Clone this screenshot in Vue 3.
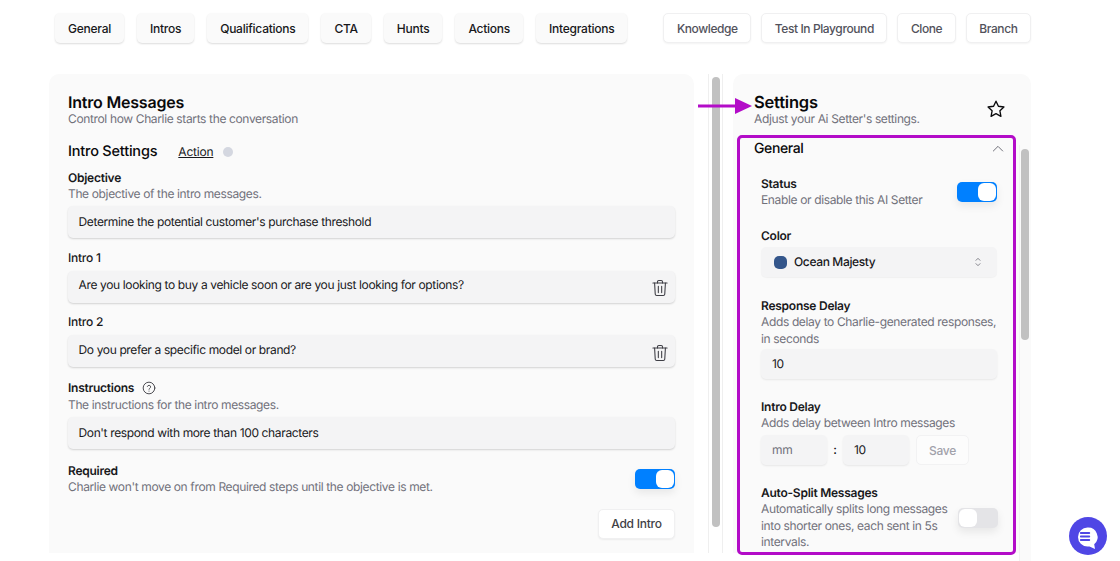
<template>
  <div class="page">
    <div class="toolbar">
      <div class="tabs">
        <button v-for="tab in tabs" :key="tab" class="btn tab">{{ tab }}</button>
      </div>
      <div class="actions">
        <button v-for="action in actions" :key="action" class="btn action">{{ action }}</button>
      </div>
    </div>

    <div class="columns">
      <section class="panel left-panel">
        <h2 class="title">Intro Messages</h2>
        <p class="desc">Control how Charlie starts the conversation</p>

        <div class="settings-head">
          <h3>Intro Settings</h3>
          <a class="action-link">Action</a>
          <span class="dot"></span>
        </div>

        <div class="label first-label">Objective</div>
        <p class="desc">The objective of the intro messages.</p>
        <div class="field wide top-gap">Determine the potential customer's purchase threshold</div>

        <template v-for="intro in intros" :key="intro.label">
          <div class="label intro-label">{{ intro.label }}</div>
          <div class="field wide intro-field">
            <span>{{ intro.text }}</span>
            <svg class="trash" viewBox="0 0 24 24" fill="none" stroke="#3f3f46" stroke-width="1.300" stroke-linecap="round" stroke-linejoin="round">
              <path d="M3.500 6h17" />
              <path d="M9 6V4.500C9 3.700 9.700 3 10.500 3h3c.8 0 1.500.7 1.500 1.500V6" />
              <path d="M5.500 6l.8 13.500c.1 1 .9 1.500 1.700 1.500h8c.8 0 1.600-.5 1.700-1.500L18.500 6" />
              <path d="M10 10v7.500M14 10v7.500" />
            </svg>
          </div>
        </template>

        <div class="label instructions-label">
          Instructions
          <svg class="help" viewBox="0 0 24 24" fill="none" stroke="#3f3f46" stroke-width="1.600" stroke-linecap="round">
            <circle cx="12" cy="12" r="10" />
            <path d="M9.200 9.300a2.900 2.900 0 0 1 5.600.9c0 1.900-2.800 2.300-2.800 4" />
            <path d="M12 17.300v.1" />
          </svg>
        </div>
        <p class="desc instructions-desc">The instructions for the intro messages.</p>
        <div class="field wide top-gap">Don't respond with more than 100 characters</div>

        <div class="switch-row required-row">
          <div>
            <div class="label">Required</div>
            <p class="desc">Charlie won't move on from Required steps until the objective is met.</p>
          </div>
          <span class="toggle on"><i></i></span>
        </div>

        <div class="add-row">
          <button class="btn add">Add Intro</button>
        </div>
      </section>

      <div class="track left-track"><span class="thumb"></span></div>

      <section class="panel right-panel">
        <div class="settings-title">
          <div>
            <h2 class="title">Settings</h2>
            <p class="desc">Adjust your Ai Setter's settings.</p>
          </div>
          <svg class="star" viewBox="0 0 24 24" fill="none" stroke="#09090b" stroke-width="1.600" stroke-linejoin="round">
            <path d="M12 2.600l2.900 6.100 6.600.9-4.800 4.600 1.200 6.600-5.900-3.200-5.900 3.200 1.200-6.600-4.800-4.600 6.600-.9z" />
          </svg>
        </div>

        <div class="scroll-area">
          <div class="general">
            <div class="general-head">
              <span>General</span>
              <svg class="chevron" viewBox="0 0 24 24" fill="none" stroke="#71717a" stroke-width="1.500" stroke-linecap="round" stroke-linejoin="round">
                <path d="M5 15l7-7 7 7" />
              </svg>
            </div>

            <div class="group">
              <div class="switch-row status-row">
                <div>
                  <div class="label">Status</div>
                  <p class="desc">Enable or disable this AI Setter</p>
                </div>
                <span class="toggle on"><i></i></span>
              </div>

              <div class="label color-label">Color</div>
              <div class="field select">
                <span class="swatch"></span>
                <span class="select-text">Ocean Majesty</span>
                <svg class="updown" viewBox="0 0 12 18" fill="none" stroke="#71717a" stroke-width="1.300" stroke-linecap="round" stroke-linejoin="round">
                  <path d="M3 6.500l3-3 3 3M3 11.500l3 3 3-3" />
                </svg>
              </div>

              <div class="label delay-label">Response Delay</div>
              <p class="desc">Adds delay to Charlie-generated responses, in seconds</p>
              <div class="field compact top-gap-small">10</div>

              <div class="label intro-delay-label">Intro Delay</div>
              <p class="desc">Adds delay between Intro messages</p>
              <div class="time-row">
                <div class="field compact time placeholder">mm</div>
                <span class="colon">:</span>
                <div class="field compact time">10</div>
                <button class="btn save">Save</button>
              </div>

              <div class="switch-row split-row">
                <div class="split-text">
                  <div class="label">Auto-Split Messages</div>
                  <p class="desc">Automatically splits long messages into shorter ones, each sent in 5s intervals.</p>
                </div>
                <span class="toggle"><i></i></span>
              </div>
            </div>
          </div>
          <div class="track right-track"><span class="thumb"></span></div>
        </div>

        <!-- annotation drawn over the screenshot -->
        <div class="highlight"></div>
        <svg class="arrow" viewBox="0 0 54 16">
          <path d="M0 6.500h37V0l17 8-17 8V9.500H0z" fill="#b30cc8" />
        </svg>
      </section>
    </div>

    <button class="chat" aria-label="Chat">
      <svg viewBox="0 0 38 38">
        <path d="M18.500 10.500a9.500 9.500 0 0 0 0 19h2l5.500 2.500-.8-4.800a9.500 9.500 0 0 0-6.700-16.700z" fill="#fff" />
        <path d="M11.800 16h8.500M11.800 19.500h8.500M11.800 23h8.500" stroke="#4f46e5" stroke-width="1.800" stroke-linecap="round" />
      </svg>
    </button>
  </div>
</template>

<script setup>
const tabs = ['General', 'Intros', 'Qualifications', 'CTA', 'Hunts', 'Actions', 'Integrations']
const actions = ['Knowledge', 'Test In Playground', 'Clone', 'Branch']

const intros = [
  { label: 'Intro 1', text: 'Are you looking to buy a vehicle soon or are you just looking for options?' },
  { label: 'Intro 2', text: 'Do you prefer a specific model or brand?' }
]
</script>

<style>
html,
body {
  margin: 0;
  background: #fff;
  overflow: hidden;
}
</style>

<style scoped>
.page {
  position: relative;
  width: 1120px;
  height: 561px;
  overflow: hidden;
  font-family: Inter, "Liberation Sans", sans-serif;
  font-size: 12px;
  line-height: 16px;
  letter-spacing: -0.36px;
  text-rendering: geometricPrecision;
  color: #09090b;
  background: #fff;
}

.toolbar {
  display: flex;
  justify-content: space-between;
  width: 976px;
  margin-left: 55px;
  padding-top: 13px;
}

.tabs {
  display: flex;
  gap: 13px;
}

.actions {
  display: flex;
  gap: 10px;
}

.btn {
  height: 30px;
  padding: 0 13px;
  border: 0;
  border-radius: 5px;
  white-space: nowrap;
  font-family: inherit;
  font-size: 12px;
  letter-spacing: -0.25px;
  font-weight: 500;
}

.tab {
  background: #fafafa;
  color: #18181b;
  box-shadow: 0 1px 2px rgba(0, 0, 0, 0.14);
}

.action {
  padding: 0 12.500px;
  background: #fff;
  border: 1px solid #f0f0f1;
  color: #52525b;
  letter-spacing: -0.4px;
  box-shadow: 0 1px 2px rgba(0, 0, 0, 0.05);
}

.columns {
  display: flex;
  height: 479px;
  margin: 31px 0 0 49px;
  width: 982px;
}

.panel {
  background: #fafafa;
  border-radius: 10px 10px 0 0;
}

.left-panel {
  width: 645px;
  padding: 20px 19px 0;
  box-sizing: border-box;
}

.title {
  margin: 0;
  font-size: 16px;
  line-height: 17px;
  font-weight: 600;
  letter-spacing: -0.2px;
}

.desc {
  margin: 0;
  color: #71717a;
  font-size: 12px;
  line-height: 16.400px;
}

.settings-head {
  display: flex;
  align-items: center;
  height: 20px;
  margin-top: 15px;
}

.settings-head h3 {
  margin: 0;
  font-size: 14.500px;
  font-weight: 500;
  letter-spacing: -0.2px;
}

.action-link {
  margin-left: 21px;
  font-size: 12px;
  letter-spacing: -0.2px;
  text-decoration: underline;
  color: #18181b;
}

.dot {
  width: 10px;
  height: 10px;
  margin-left: 10px;
  border-radius: 50%;
  background: #d4d7e0;
}

.label {
  font-size: 12px;
  line-height: 16px;
  font-weight: 600;
  letter-spacing: -0.25px;
  color: #18181b;
}

.first-label {
  margin-top: 8px;
}

.field {
  box-sizing: border-box;
  display: flex;
  align-items: center;
  height: 30px;
  padding: 0 10.500px;
  background: #f4f4f5;
  border-radius: 5px;
  box-shadow: 0 1px 2px rgba(0, 0, 0, 0.16);
  color: #18181b;
}

.wide {
  height: 32px;
}

.top-gap {
  margin-top: 3.200px;
}

.intro-label {
  margin-top: 11.500px;
  font-weight: 500;
}

.intro-field {
  justify-content: space-between;
  margin-top: 5px;
  padding-bottom: 3px;
}

.trash {
  width: 20px;
  height: 20px;
  margin: 6px -5px 0 0;
  flex-shrink: 0;
}

.instructions-label {
  display: flex;
  align-items: center;
  gap: 8px;
  margin-top: 13px;
}

.instructions-desc {
  margin-top: 1px;
}

.help {
  width: 14px;
  height: 14px;
}

.switch-row {
  display: flex;
  justify-content: space-between;
  align-items: center;
}

.required-row {
  margin-top: 14px;
}

.toggle {
  position: relative;
  display: block;
  width: 40px;
  height: 20px;
  flex-shrink: 0;
  border-radius: 5px;
  background: #e4e4e7;
  box-shadow: 0 4px 8px rgba(0, 0, 0, 0.08);
}

.toggle i {
  position: absolute;
  top: 1px;
  left: 1px;
  width: 18px;
  height: 18px;
  border-radius: 6px;
  background: #fff;
}

.toggle.on {
  background: #0080ff;
}

.toggle.on i {
  left: auto;
  right: 1px;
}

.add-row {
  display: flex;
  justify-content: flex-end;
  margin-top: 13.500px;
}

.add {
  width: 77px;
  padding: 0;
  background: #fff;
  color: #3f3f46;
  border: 1px solid #f0f0f1;
  box-shadow: 0 1px 2px rgba(0, 0, 0, 0.06);
}

.track {
  box-sizing: border-box;
  flex-shrink: 0;
  background: #fff;
}

.thumb {
  display: block;
  border-radius: 5px;
  background: #c1c1c1;
}

.left-track {
  width: 15px;
  margin-left: 14px;
  padding: 3px 3px 0;
  border-left: 1px solid #efefef;
  border-right: 1px solid #efefef;
}

.left-track .thumb {
  width: 8px;
  height: 450px;
}

.right-panel {
  position: relative;
  width: 298px;
  margin-left: 10px;
  box-sizing: border-box;
  padding-top: 20px;
}

.settings-title {
  display: flex;
  justify-content: space-between;
  align-items: flex-start;
  height: 61px;
  padding-left: 21px;
}

.right-panel .title {
  font-size: 16.500px;
}

.star {
  width: 20px;
  height: 20px;
  margin: 5px 25px 0 0;
}

.scroll-area {
  display: flex;
}

.general {
  width: 286px;
  padding-left: 21px;
  box-sizing: border-box;
}

.general-head {
  display: flex;
  justify-content: space-between;
  align-items: center;
  width: 251.500px;
  height: 16px;
  margin-top: -14px;
  font-size: 14px;
  font-weight: 500;
  letter-spacing: -0.4px;
}

.chevron {
  width: 16px;
  height: 16px;
}

.group {
  width: 236px;
  padding-left: 7px;
}

.status-row {
  margin-top: 18.500px;
}

.color-label {
  margin-top: 20.500px;
}

.select {
  margin-top: 3px;
  padding: 0 15px 0 13px;
  box-shadow: 0 1px 1px rgba(0, 0, 0, 0.04);
}

.swatch {
  width: 13px;
  height: 13px;
  border-radius: 5px;
  background: #34568b;
}

.select-text {
  flex: 1;
  margin-left: 7px;
  font-weight: 500;
}

.updown {
  width: 8px;
  height: 12px;
}

.delay-label {
  margin-top: 21px;
}

.compact {
  height: 30px;
  padding: 0 11px;
  box-shadow: 0 1px 2px rgba(0, 0, 0, 0.08);
}

.top-gap-small {
  margin-top: 2px;
}

.intro-delay-label {
  margin-top: 20px;
}

.time-row {
  display: flex;
  align-items: center;
  margin-top: 3.500px;
}

.time {
  width: 66px;
}

.placeholder {
  color: #71717a;
}

.colon {
  width: 16px;
  text-align: center;
  font-weight: 500;
}

.save {
  width: 53px;
  margin-left: 7px;
  padding: 0;
  color: #a1a1aa;
  background: #fcfcfc;
  border: 1px solid #f2f2f3;
}

.split-row {
  margin-top: 20px;
}

.split-text {
  width: 190px;
}

.split-row .toggle {
  margin-right: -1px;
}

.right-track {
  width: 12px;
  height: 422px;
  padding: 4px 1px 0;
  margin-top: -10px;
  background: #fafafa;
  border-left: 1px solid #f2f2f2;
  box-sizing: border-box;
}

.right-track .thumb {
  width: 8px;
  height: 191px;
}

.highlight {
  position: absolute;
  top: 61px;
  left: 4px;
  width: 279px;
  height: 420px;
  box-sizing: border-box;
  border: 3px solid #b30cc8;
  border-radius: 5px;
  pointer-events: none;
}

.arrow {
  position: absolute;
  top: 24px;
  left: -35px;
  width: 54px;
  height: 16px;
}

.chat {
  position: absolute;
  left: 1069px;
  top: 517px;
  width: 38px;
  height: 38px;
  padding: 0;
  border: 0;
  border-radius: 50%;
  background: #4f46e5;
}

.chat svg {
  display: block;
  width: 38px;
  height: 38px;
}
</style>
